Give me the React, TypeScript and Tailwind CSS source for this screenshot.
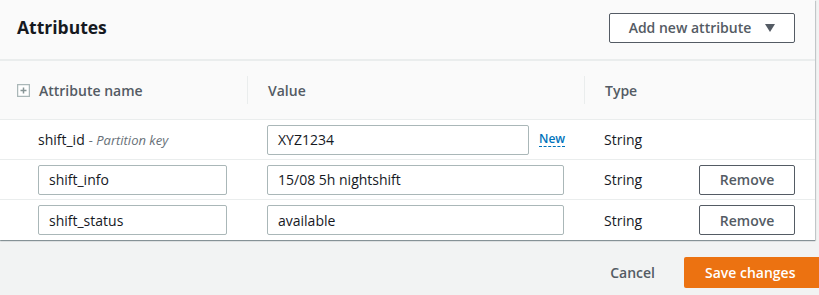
import React from "react";

const font = { fontFamily: '"Open Sans", "Noto Sans", Arial, sans-serif' };

function Input({ value, w }: { value: string; w: string }) {
  return (
    <div
      className={`${w} h-[30px] border border-[#aab7b8] rounded-[2px] bg-white flex items-center px-[10px] text-[14px] text-[#16191f]`}
    >
      {value}
    </div>
  );
}

function RemoveBtn() {
  return (
    <div className="w-[96px] h-[30px] border border-[#545b64] rounded-[2px] bg-white flex items-center justify-center text-[14px] font-semibold text-[#545b64]">
      Remove
    </div>
  );
}

export default function App() {
  return (
    <div className="w-[819px] h-[295px] bg-[#f2f3f3] overflow-hidden" style={font}>
      <div className="w-[815px] bg-white shadow-[0_1px_1px_0_rgba(0,28,36,0.35),1px_1px_1px_0_rgba(0,28,36,0.15)]">
        {/* header */}
        <div className="h-[61px] bg-[#fafafa] border-b-2 border-[#eaeded] flex items-center justify-between pl-[17px] pr-[20px] pb-[4px]">
          <div className="text-[17.5px] font-bold text-[#16191f] leading-none">Attributes</div>
          <div className="w-[186px] h-[30px] border border-[#545b64] rounded-[2px] bg-white flex items-center justify-center gap-[14px] text-[14px] font-semibold text-[#545b64]">
            <span>Add new attribute</span>
            <svg width="10" height="8" viewBox="0 0 10 8">
              <path d="M0 0 L10 0 L5 8 Z" fill="#545b64" />
            </svg>
          </div>
        </div>
        {/* table header */}
        <div className="h-[59px] bg-[#fafafa] border-b border-[#eaeded] flex items-center text-[14px] font-semibold text-[#545b64]">
          <div className="w-[247px] pl-[17px] flex items-center gap-[9px]">
            <svg width="13" height="13" viewBox="0 0 13 13">
              <rect x="0.5" y="0.5" width="12" height="12" fill="white" stroke="#aab7b8" strokeWidth="1.5" />
              <path d="M6.5 3.5 V9.5 M3.5 6.5 H9.5" stroke="#879596" strokeWidth="1.5" />
            </svg>
            <span>Attribute name</span>
          </div>
          <div className="w-[337px] h-[28px] border-l border-[#eaeded] pl-[20px] flex items-center">Value</div>
          <div className="flex-1 h-[28px] border-l border-[#eaeded] pl-[20px] flex items-center">Type</div>
        </div>
        {/* row 1 */}
        <div className="h-[40px] border-b border-[#eaeded] flex items-center text-[14px] text-[#16191f]">
          <div className="w-[247px] pl-[38px] flex items-baseline gap-[4px]">
            <span>shift_id</span>
            <span className="text-[13px] italic text-[#687078]">- Partition key</span>
          </div>
          <div className="w-[337px] pl-[20px] flex items-center gap-[10px]">
            <Input value="XYZ1234" w="w-[262px]" />
            <span className="text-[12px] font-semibold text-[#0073bb] border-b border-dashed border-[#0073bb] leading-[15px] mb-[2px]">New</span>
          </div>
          <div className="flex-1 pl-[20px]">String</div>
        </div>
        {/* row 2 */}
        <div className="h-[40px] border-b border-[#eaeded] flex items-center text-[14px] text-[#16191f]">
          <div className="w-[247px] pl-[38px]">
            <Input value="shift_info" w="w-[189px]" />
          </div>
          <div className="w-[337px] pl-[20px]">
            <Input value="15/08 5h nightshift" w="w-[297px]" />
          </div>
          <div className="w-[115px] pl-[20px]">String</div>
          <RemoveBtn />
        </div>
        {/* row 3 */}
        <div className="h-[40px] flex items-center text-[14px] text-[#16191f]">
          <div className="w-[247px] pl-[38px]">
            <Input value="shift_status" w="w-[189px]" />
          </div>
          <div className="w-[337px] pl-[20px]">
            <Input value="available" w="w-[297px]" />
          </div>
          <div className="w-[115px] pl-[20px]">String</div>
          <RemoveBtn />
        </div>
      </div>
      {/* footer */}
      <div className="flex items-center justify-end pt-[17px] gap-[29px]">
        <span className="text-[14px] font-semibold text-[#545b64]">Cancel</span>
        <div className="w-[140px] h-[31px] bg-[#ec7211] rounded-[2px] flex items-center pl-[21px] text-[14px] font-semibold text-white shrink-0 -mr-[5px]">
          Save changes
        </div>
      </div>
    </div>
  );
}
